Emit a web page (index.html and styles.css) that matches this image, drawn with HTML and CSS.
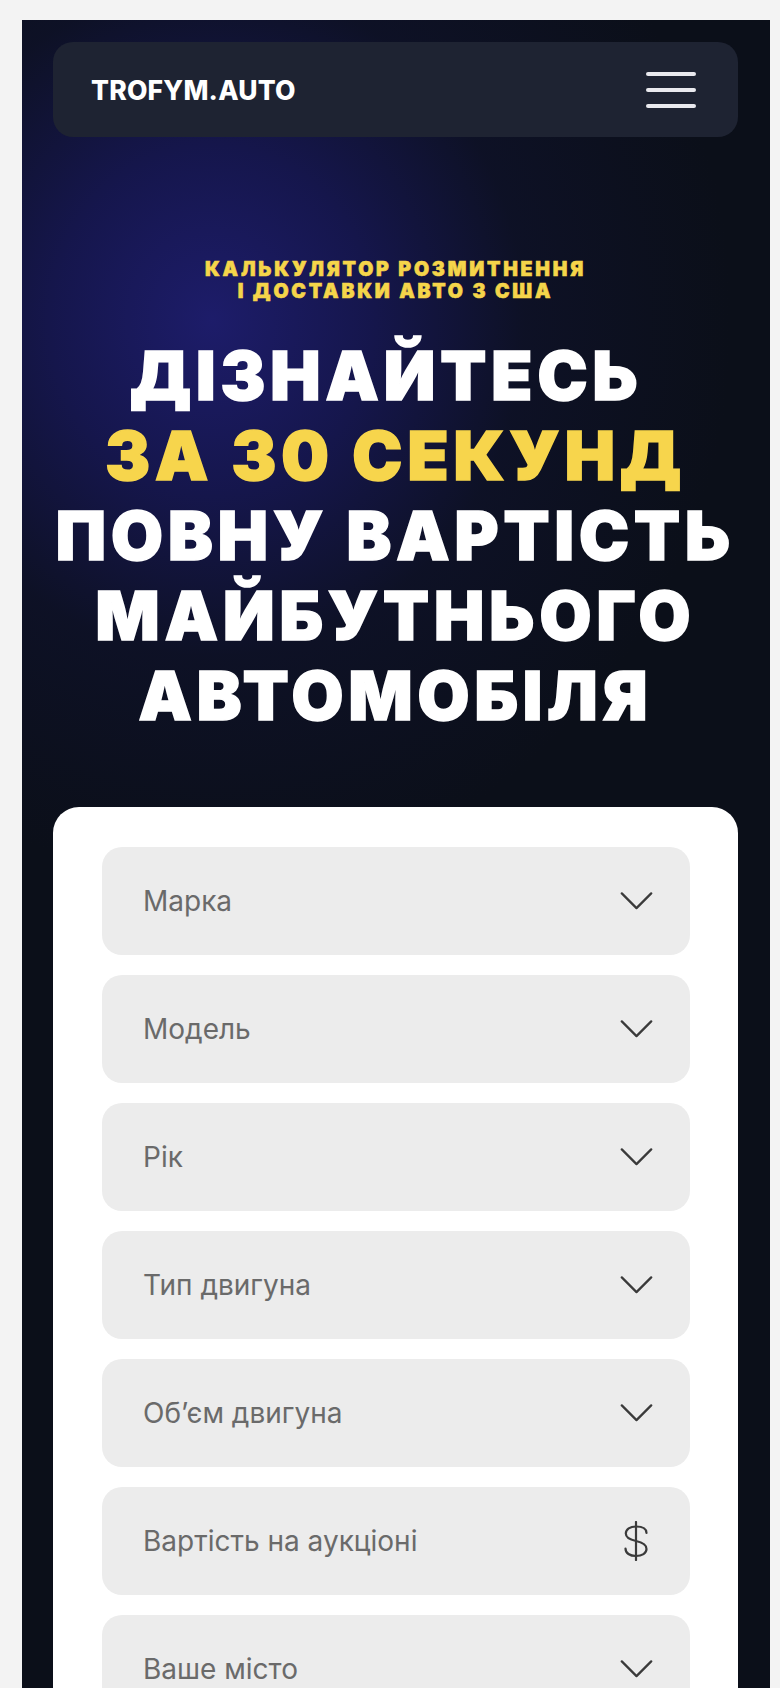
FILE: index.html
```html
<!DOCTYPE html>
<html lang="uk">
<head>
<meta charset="utf-8">
<title>TROFYM.AUTO</title>
<link rel="stylesheet" href="styles.css">
</head>
<body>
<div class="frame">
  <header class="nav">
    <div class="logo">TROFYM.AUTO</div>
    <div class="burger"><span></span><span></span><span></span></div>
  </header>
  <section class="hero">
    <p class="eyebrow">КАЛЬКУЛЯТОР РОЗМИТНЕННЯ<br>І ДОСТАВКИ АВТО З США</p>
    <h1 class="title">ДІЗНАЙТЕСЬ&nbsp;<br><span class="accent">ЗА 30 СЕКУНД</span><br>ПОВНУ ВАРТІСТЬ<br>МАЙБУТНЬОГО<br>АВТОМОБІЛЯ</h1>
  </section>
  <form class="card">
    <div class="field"><span class="ph">Марка</span><svg class="chev" viewBox="0 0 34 19"><path d="M1.5 1.5 L17 17 L32.5 1.5"/></svg></div>
    <div class="field"><span class="ph">Модель</span><svg class="chev" viewBox="0 0 34 19"><path d="M1.5 1.5 L17 17 L32.5 1.5"/></svg></div>
    <div class="field"><span class="ph">Рік</span><svg class="chev" viewBox="0 0 34 19"><path d="M1.5 1.5 L17 17 L32.5 1.5"/></svg></div>
    <div class="field"><span class="ph">Тип двигуна</span><svg class="chev" viewBox="0 0 34 19"><path d="M1.5 1.5 L17 17 L32.5 1.5"/></svg></div>
    <div class="field"><span class="ph">Об’єм двигуна</span><svg class="chev" viewBox="0 0 34 19"><path d="M1.5 1.5 L17 17 L32.5 1.5"/></svg></div>
    <div class="field"><span class="ph">Вартість на аукціоні</span><svg class="dollar" viewBox="0 0 30 40"><path d="M15 1 V39"/><path d="M25.5 12 C25.5 7.5 21 5.5 15 5.5 C9 5.5 4.8 8.3 4.8 12.6 C4.8 17.6 10 19 15 20 C20.5 21.1 25.5 23 25.5 28 C25.5 32.2 21 35 15 35 C8.8 35 4.5 32.2 4.5 27.5"/></svg></div>
    <div class="field"><span class="ph">Ваше місто</span><svg class="chev" viewBox="0 0 34 19"><path d="M1.5 1.5 L17 17 L32.5 1.5"/></svg></div>
  </form>
</div>
</body>
</html>
```

FILE: styles.css
```css
* { box-sizing: border-box; }
html, body { margin: 0; padding: 0; }
body {
  background: #f3f3f3;
  font-family: Inter, "Noto Sans", sans-serif;
  padding: 20px 10px 0 22px;
}
.frame {
  background:
    radial-gradient(ellipse 520px 560px at 190px 300px, rgba(30,29,110,0.95) 0%, rgba(24,24,90,0.8) 30%, rgba(16,19,50,0.5) 60%, rgba(11,14,24,0) 100%),
    #0b0f19;
  padding: 22px 32px 60px 31px;
  min-height: 1800px;
}
.nav {
  height: 95px;
  background: #1e2332;
  border-radius: 20px;
  display: flex;
  align-items: center;
  justify-content: space-between;
  padding: 0 42px 0 38px;
}
.logo {
  color: #fff;
  font-family: Inter, sans-serif;
  font-weight: 800;
  font-size: 26.5px;
  letter-spacing: 0.2px;
}
.burger {
  display: flex;
  flex-direction: column;
  gap: 12px;
}
.burger span {
  display: block;
  width: 50px;
  height: 4px;
  border-radius: 2px;
  background: #e9e9ee;
}
.hero {
  margin-top: 121px;
  text-align: center;
}
.eyebrow {
  margin: 0;
  color: #f5d54a;
  font-family: Inter, sans-serif;
  font-weight: 900;
  font-size: 19.5px;
  line-height: 22px;
  letter-spacing: 2.8px;
  -webkit-text-stroke: 0.6px #f5d54a;
}
.title {
  margin: 34px 0 0;
  color: #fff;
  font-family: Inter, sans-serif;
  font-weight: 900;
  font-size: 67px;
  line-height: 80px;
  letter-spacing: 5px;
  -webkit-text-stroke: 1.6px #fff;
}
.accent { color: #f7d54c; -webkit-text-stroke-color: #f7d54c; }
.card {
  margin-top: 71px;
  background: #fff;
  border-radius: 26px;
  padding: 40px 48px 60px 49px;
  display: flex;
  flex-direction: column;
  gap: 20px;
}
.field {
  height: 108px;
  background: #ececec;
  border-radius: 20px;
  display: flex;
  align-items: center;
  justify-content: space-between;
  padding: 0 37px 0 41px;
}
.ph {
  color: #6a6a6a;
  font-family: Inter, sans-serif;
  font-size: 28px;
}
.chev {
  width: 33px;
  height: 18px;
  fill: none;
  stroke: #3a3a3a;
  stroke-width: 2.4;
  stroke-linecap: round;
  stroke-linejoin: round;
}
.dollar {
  width: 30px;
  height: 40px;
  margin-right: 2px;
  fill: none;
  stroke: #3a3a3a;
  stroke-width: 2.2;
  stroke-linecap: round;
}
```
